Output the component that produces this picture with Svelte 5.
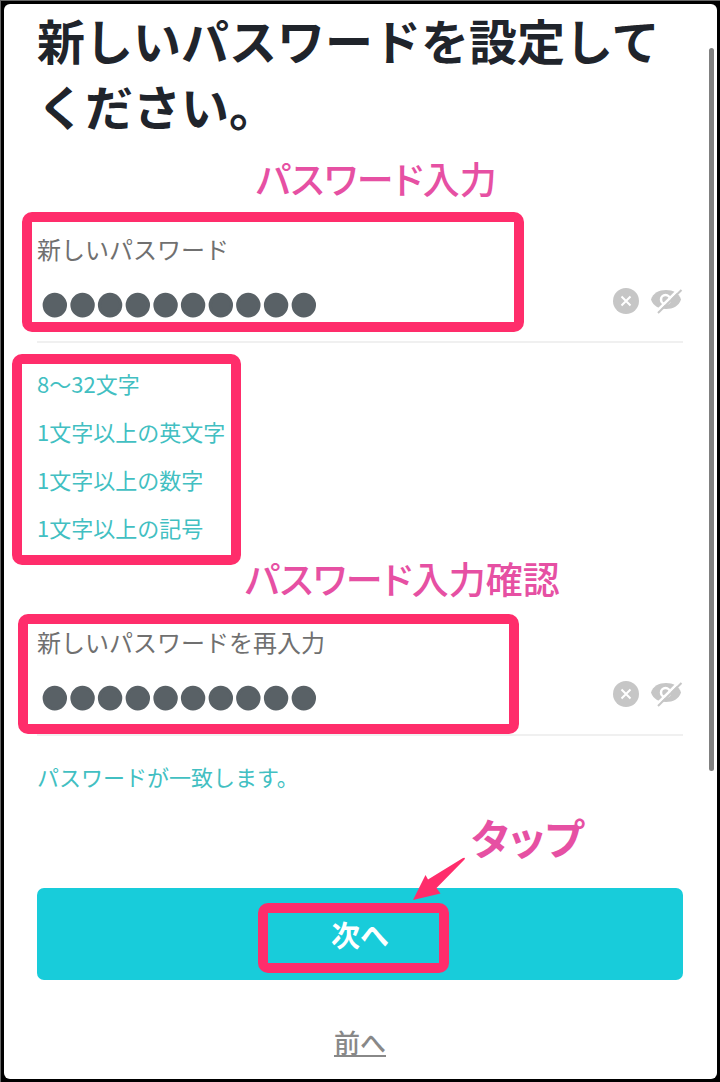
<script lang="ts">
  let password = $state("Abcd1234!?");
  let confirmation = $state("Abcd1234!?");
  let showPassword = $state(false);
  let showConfirmation = $state(false);

  const rules = [
    "8〜32文字",
    "1文字以上の英文字",
    "1文字以上の数字",
    "1文字以上の記号",
  ];

  let matches = $derived(password.length > 0 && password === confirmation);
</script>

{#snippet clearIcon()}
  <svg width="26" height="26" viewBox="0 0 26 26" aria-hidden="true">
    <circle cx="13" cy="13" r="13" fill="#c6c6c6" />
    <path d="M8.5 8.5l9 9M17.5 8.5l-9 9" stroke="#fff" stroke-width="2" />
  </svg>
{/snippet}

{#snippet eyeIcon()}
  <svg width="32" height="26" viewBox="0 0 32 26" aria-hidden="true">
    <path d="M0 11.5C2 5 8 2 15 2S28 5 30 11.500C28 18 22 21 15 21S2 18 0 11.500z" fill="#c6c6c6" />
    <circle cx="14.5" cy="11.5" r="4.5" fill="none" stroke="#fff" stroke-width="2.5" />
    <path d="M5 24L28.500 0.500" stroke="#fff" stroke-width="2.5" />
    <path d="M7 25L30.500 2" stroke="#c6c6c6" stroke-width="2" />
  </svg>
{/snippet}

<main class="screen">
  <h1>新しいパスワードを設定してください。</h1>

  <form onsubmit={(e) => e.preventDefault()}>
    <div class="field">
      <label for="password">新しいパスワード</label>
      <div class="control">
        <input id="password" type={showPassword ? "text" : "password"} bind:value={password} />
        <button type="button" class="icon" aria-label="消去" onclick={() => (password = "")}>
          {@render clearIcon()}
        </button>
        <button type="button" class="icon" aria-label="表示" onclick={() => (showPassword = !showPassword)}>
          {@render eyeIcon()}
        </button>
      </div>
      <span class="note note-password">パスワード入力</span>
      <span class="mark mark-password"></span>
    </div>

    <div class="rules">
      <ul>
        {#each rules as rule (rule)}
          <li>{rule}</li>
        {/each}
      </ul>
      <span class="mark mark-rules"></span>
    </div>

    <div class="field">
      <label for="confirmation">新しいパスワードを再入力</label>
      <div class="control">
        <input id="confirmation" type={showConfirmation ? "text" : "password"} bind:value={confirmation} />
        <button type="button" class="icon" aria-label="消去" onclick={() => (confirmation = "")}>
          {@render clearIcon()}
        </button>
        <button type="button" class="icon" aria-label="表示" onclick={() => (showConfirmation = !showConfirmation)}>
          {@render eyeIcon()}
        </button>
      </div>
      <span class="note note-confirm">パスワード入力確認</span>
      <span class="mark mark-confirm"></span>
    </div>

    <p class="status">{matches ? "パスワードが一致します。" : ""}</p>

    <div class="submit">
      <button type="submit" class="next">次へ</button>
      <span class="mark mark-next"></span>
      <span class="note note-tap">タップ</span>
      <svg class="arrow" width="54" height="44" viewBox="0 0 54 44" aria-hidden="true">
        <path d="M0 43L12.500 18L15 22.500L50 1Q53 0 51.500 2.500L23.500 31L27.500 36.500z" fill="#ff2d6b" />
      </svg>
    </div>
  </form>

  <a class="back" href="#back">前へ</a>
  <span class="scrollbar"></span>
</main>

<style>
  :global(body) {
    background: #000;
  }

  :global(#app) {
    padding: 4px 0 3px;
    box-shadow: inset 1px 1px #666;
  }

  .screen {
    position: relative;
    box-sizing: border-box;
    display: flex;
    flex-direction: column;
    min-height: calc(100vh - 7px);
    margin: 0 3px 0 4px;
    padding: 2px 34px 21px 33px;
    border-radius: 6px;
    background: #fff;
    font-family: "Noto Sans CJK JP", sans-serif;
  }

  h1 {
    margin: 0 0 95px;
    color: #20242b;
    font-size: 48px;
    font-weight: 700;
    line-height: 66px;
  }

  .field,
  .rules,
  .submit {
    position: relative;
  }

  label {
    display: block;
    color: #707070;
    font-size: 24px;
    line-height: 32px;
  }

  .control {
    display: flex;
    align-items: center;
    gap: 12px;
    height: 72px;
    margin-top: 4px;
    border-bottom: 2px solid #f0f0f0;
  }

  input {
    flex: 1;
    min-width: 0;
    height: 72px;
    padding: 0 0 0 4px;
    border: 0;
    outline: 0;
    background: transparent;
    color: #596166;
    font-family: "Liberation Sans", sans-serif;
    font-size: 79px;
    line-height: 72px;
  }

  /* Heavier mask dots */
  input[type="password"] {
    -webkit-text-stroke: 3px #596166;
  }

  .icon {
    padding: 0 0 8px;
    border: 0;
    background: none;
  }

  svg {
    display: block;
  }

  .rules {
    margin: 16px 0 75px;
  }

  ul {
    margin: 0;
    padding: 0;
    list-style: none;
  }

  li,
  .status {
    color: #42bfc2;
    font-size: 22px;
    line-height: 48px;
  }

  .status {
    min-height: 48px;
    margin: 16px 0 88px;
  }

  .next {
    display: block;
    width: 100%;
    height: 92px;
    padding: 0;
    border: 0;
    border-radius: 7px;
    background: #18ccda;
    color: #fff;
    font-family: inherit;
    font-size: 29px;
    font-weight: 700;
  }

  .back {
    align-self: center;
    margin-top: 46px;
    color: #888;
    font-size: 26px;
    font-weight: 500;
    line-height: 32px;
  }

  /* Guide marks drawn over the form */
  .mark {
    position: absolute;
    box-sizing: border-box;
    border: 10px solid #ff2d6b;
    border-radius: 10px;
    pointer-events: none;
  }

  .mark-password {
    top: -21px;
    left: -15px;
    width: 502px;
    height: 120px;
  }

  .mark-rules {
    top: -5px;
    left: -25px;
    width: 229px;
    height: 211px;
  }

  .mark-confirm {
    top: -12px;
    left: -19px;
    width: 501px;
    height: 120px;
  }

  .mark-next {
    top: 15px;
    left: calc(50% - 102px);
    width: 191px;
    height: 70px;
  }

  .note {
    position: absolute;
    color: #e650a3;
    font-size: 37px;
    font-weight: 500;
    font-feature-settings: "palt";
    line-height: 48px;
    white-space: nowrap;
    pointer-events: none;
  }

  .note-password {
    top: -79px;
    left: 219px;
  }

  .note-confirm {
    top: -72px;
    left: 208px;
  }

  .note-tap {
    top: -75px;
    left: calc(50% + 111px);
    font-size: 42px;
    font-weight: 700;
  }

  .arrow {
    position: absolute;
    top: -31px;
    left: calc(50% + 53px);
  }

  .scrollbar {
    position: absolute;
    top: 44px;
    right: 3px;
    width: 5px;
    height: 723px;
    border-radius: 3px;
    background: #808080;
  }
</style>
